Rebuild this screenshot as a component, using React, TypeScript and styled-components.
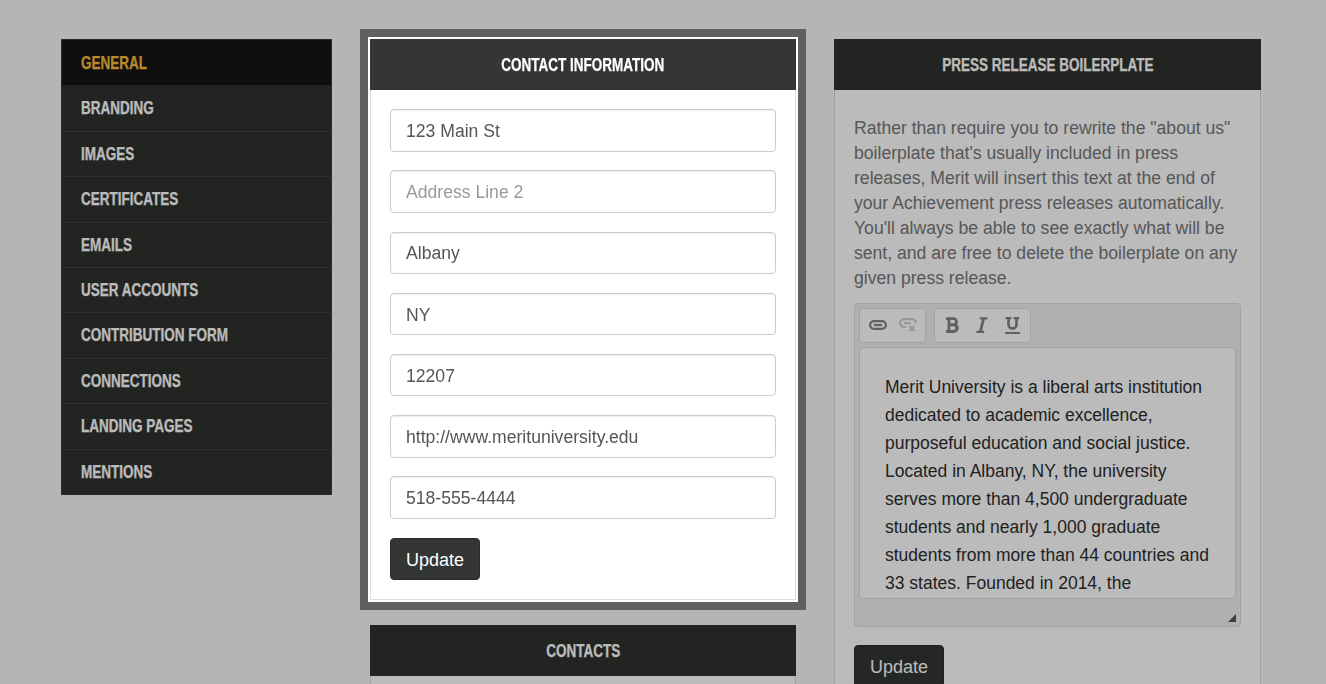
import { FC } from 'react';
import styled, { createGlobalStyle } from 'styled-components';
import { FaBold, FaItalic, FaUnderline } from 'react-icons/fa';

// ----------------------------------------------------------------------------

const GlobalStyle = createGlobalStyle`
  html, body {
    margin: 0;
    height: 100%;
    overflow: hidden;
    background: #f7f7f7;
  }

  body {
    font-family: "Liberation Sans", Arial, sans-serif;
    color: #333;
  }

  * {
    box-sizing: border-box;
  }
`;

const NAV_ITEMS = [
  'General',
  'Branding',
  'Images',
  'Certificates',
  'Emails',
  'User Accounts',
  'Contribution Form',
  'Connections',
  'Landing Pages',
  'Mentions',
];

const CONTACT_FIELDS = [
  { value: '123 Main St' },
  { placeholder: 'Address Line 2' },
  { value: 'Albany' },
  { value: 'NY' },
  { value: '12207' },
  { value: 'http://www.merituniversity.edu' },
  { value: '518-555-4444' },
];

const INTRO = `Rather than require you to rewrite the "about us" boilerplate that's usually included in press releases, Merit will insert this text at the end of your Achievement press releases automatically. You'll always be able to see exactly what will be sent, and are free to delete the boilerplate on any given press release.`;

const BOILERPLATE = `Merit University is a liberal arts institution dedicated to academic excellence, purposeful education and social justice. Located in Albany, NY, the university serves more than 4,500 undergraduate students and nearly 1,000 graduate students from more than 44 countries and 33 states. Founded in 2014, the`;

// ----------------------------------------------------------------------------

const Page = styled.div`
  display: grid;
  grid-template-columns: 271px 426px 427px;
  column-gap: 38px;
  align-items: start;
  padding: 39px 0 0 61px;
  width: 1326px;
`;

const Overlay = styled.div`
  position: fixed;
  inset: 0;
  z-index: 10;
  background: rgba(0, 0, 0, 0.265);
`;

const SideNav = styled.nav`
  display: flex;
  flex-direction: column;
  border: 1px solid #383b38;
  background: #2f322f;
`;

const NavItem = styled.a<{ $active?: boolean }>`
  display: block;
  height: 45.4px;
  padding: ${(p) => (p.$active ? '1px' : '0')} 0 0 19px;
  line-height: 45px;
  color: ${(p) => (p.$active ? '#f8bd3f' : '#fff')};
  background: ${(p) => (p.$active ? '#151515' : 'transparent')};
  border-top: ${(p) => (p.$active ? '0' : '1px solid #404340')};

  &:nth-child(2) {
    border-top-color: transparent;
  }
`;

// Headings are a condensed face in the reference, no such family is installed
const CondensedLabel = styled.span<{ $origin?: string }>`
  display: inline-block;
  font-size: 18px;
  font-weight: 700;
  text-transform: uppercase;
  white-space: nowrap;
  transform: scaleX(0.75);
  transform-origin: ${(p) => p.$origin ?? 'left'} center;
  -webkit-text-stroke: 0.25px currentColor;
`;

const Column = styled.div`
  display: flex;
  flex-direction: column;
  gap: 25px;
`;

const Panel = styled.section<{ $highlight?: boolean }>`
  position: relative;
  border: 1px solid #ddd;
  border-top: 0;
  background: #fff;
  ${(p) =>
    p.$highlight &&
    `
    z-index: 20;
    box-shadow: 0 0 0 2px #fff, 0 0 0 10px #606060;
  `}
`;

const PanelHeader = styled.h2<{ $highlight?: boolean }>`
  margin: 0 -1px;
  height: 51px;
  background: ${(p) => (p.$highlight ? '#333633' : '#2f322f')};
  color: #fff;
  font-size: 18px;
  font-weight: 700;
  line-height: 52px;
  text-align: center;
`;

const PanelBody = styled.div`
  display: flex;
  flex-direction: column;
  padding: 19px;
`;

const ContactForm = styled.form`
  display: flex;
  flex-direction: column;
  gap: 18.8px;
  padding-top: 0.3px;
  padding-bottom: 0.7px;
`;

const TextInput = styled.input`
  display: block;
  width: 100%;
  height: 42.4px;
  padding: 2px 15px 0;
  border: 1px solid #ccc;
  border-radius: 4px;
  background: #fff;
  color: #555;
  font-family: "Liberation Sans", Arial, sans-serif;
  font-size: 17.6px;
  box-shadow: inset 0 1px 1px rgba(0, 0, 0, 0.075);

  &::placeholder {
    color: #999;
    opacity: 1;
  }
`;

const PrimaryButton = styled.button`
  align-self: flex-start;
  width: 90px;
  height: 42px;
  padding: 3px 0 0;
  border: 1px solid #2a2c2a;
  border-radius: 4px;
  background: #333633;
  color: #fff;
  font-family: "Liberation Sans", Arial, sans-serif;
  font-size: 18px;
`;

const Intro = styled.p`
  margin: 7px 0 11.5px;
  color: #777;
  font-size: 17.6px;
  line-height: 25px;
`;

const Editor = styled.div`
  position: relative;
  height: 324px;
  margin-bottom: 18px;
  padding: 4px 4px 0;
  border: 1px solid #ddd;
  border-radius: 4px;
  background: #f0f0f0;
`;

const Toolbar = styled.div`
  display: flex;
  gap: 7.5px;
  height: 35px;
  margin-bottom: 4px;
`;

const ToolGroup = styled.div`
  display: flex;
  align-items: center;
  gap: 10px;
  padding: 0 7.5px;
  border: 1px solid #ddd;
  border-radius: 4px;
  background: #fff;
`;

const ToolIcon = styled.span<{ $muted?: boolean }>`
  display: inline-flex;
  width: 20px;
  justify-content: center;
  color: ${(p) => (p.$muted ? '#d0d0d0' : '#858585')};
`;

const EditorContent = styled.div`
  height: 252px;
  padding: 25px 20px 0 25px;
  overflow: hidden;
  border: 1px solid #ddd;
  border-radius: 4px;
  background: #fff;
  color: #2e2e2e;
  font-size: 17.5px;
  line-height: 28px;
`;

const ResizeHandle = styled.svg`
  position: absolute;
  right: 4px;
  bottom: 4px;
`;

// ----------------------------------------------------------------------------

const LinkIcon: FC = () => (
  <svg width="18" height="10" viewBox="0 0 18 10" fill="none" stroke="currentColor" strokeWidth="2.2">
    <rect x="1.1" y="1.1" width="15.8" height="7.8" rx="3.9" />
    <path d="M5 5h8" />
  </svg>
);

const UnlinkIcon: FC = () => (
  <svg width="18" height="14" viewBox="0 0 18 14" fill="none" stroke="currentColor" strokeWidth="2.2">
    <path d="M7 9H5a3.9 3.9 0 0 1 0-7.8h8a3.9 3.9 0 0 1 3.9 3.9" />
    <path d="M5 5.1h7" />
    <path d="M10.5 8l5 5M15.5 8l-5 5" />
  </svg>
);

const App: FC = () => {
  return (
    <>
      <GlobalStyle />
      <Page>
        <SideNav>
          {NAV_ITEMS.map((item, i) => (
            <NavItem key={item} $active={i === 0}>
              <CondensedLabel>{item}</CondensedLabel>
            </NavItem>
          ))}
        </SideNav>

        <Column>
          <Panel $highlight>
            <PanelHeader $highlight>
              <CondensedLabel $origin="center">Contact Information</CondensedLabel>
            </PanelHeader>
            <PanelBody>
              <ContactForm>
                {CONTACT_FIELDS.map((field, i) => (
                  <TextInput key={i} defaultValue={field.value} placeholder={field.placeholder} />
                ))}
                <PrimaryButton type="button">Update</PrimaryButton>
              </ContactForm>
            </PanelBody>
          </Panel>

          <Panel>
            <PanelHeader>
              <CondensedLabel $origin="center">Contacts</CondensedLabel>
            </PanelHeader>
            <PanelBody />
          </Panel>
        </Column>

        <Panel>
          <PanelHeader>
            <CondensedLabel $origin="center">Press Release Boilerplate</CondensedLabel>
          </PanelHeader>
          <PanelBody>
            <Intro>{INTRO}</Intro>
            <Editor>
              <Toolbar>
                <ToolGroup>
                  <ToolIcon>
                    <LinkIcon />
                  </ToolIcon>
                  <ToolIcon $muted>
                    <UnlinkIcon />
                  </ToolIcon>
                </ToolGroup>
                <ToolGroup>
                  <ToolIcon>
                    <FaBold size={18} />
                  </ToolIcon>
                  <ToolIcon>
                    <FaItalic size={18} />
                  </ToolIcon>
                  <ToolIcon>
                    <FaUnderline size={17} />
                  </ToolIcon>
                </ToolGroup>
              </Toolbar>
              <EditorContent>{BOILERPLATE}</EditorContent>
              <ResizeHandle width="8" height="8" viewBox="0 0 8 8">
                <path d="M8 0v8H0z" fill="#555" />
              </ResizeHandle>
            </Editor>
            <PrimaryButton type="button">Update</PrimaryButton>
          </PanelBody>
        </Panel>
      </Page>
      <Overlay />
    </>
  );
};

export default App;
